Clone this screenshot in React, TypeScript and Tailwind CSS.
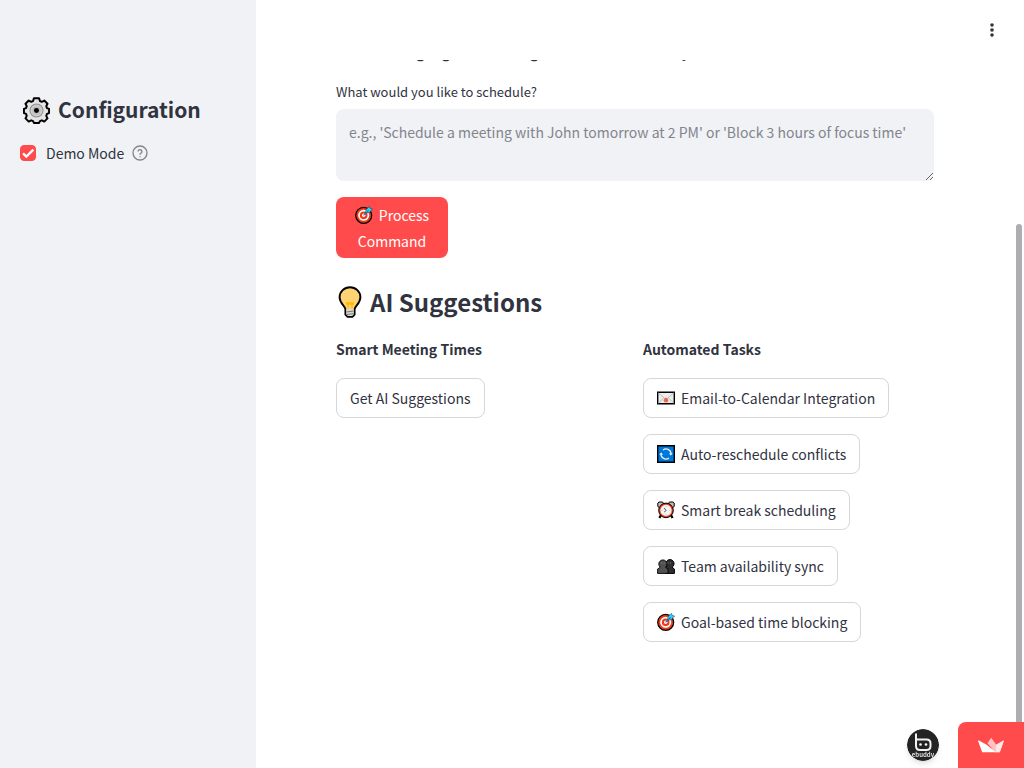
import { ReactNode } from "react";

type IconProps = { className?: string };

function GearIcon({ className }: IconProps) {
  return (
    <svg viewBox="0 0 26 26" className={className} aria-hidden="true">
      <path
        d="M10.5 1.2h5l.8 2.7 1.8.7 2.4-1.2 3.1 3.1-1.2 2.4.7 1.8 2 .8v4l-2 .8-.7 1.9 1.2 2.4-3.1 3.1-2.4-1.2-1.8.7-.8 1.8h-5l-.8-1.8-1.8-.7-2.4 1.2-3.1-3.1 1.2-2.4-.7-1.9-2-.8v-4l2-.8.7-1.8-1.2-2.4 3.1-3.1 2.4 1.2 1.8-.7z"
        fill="#e4e4e4"
        stroke="#000"
        strokeWidth="1.9"
        strokeLinejoin="round"
      />
      <circle cx="13" cy="13" r="6.3" fill="#cdcdcd" stroke="#8e8e8e" strokeWidth="1" />
      <circle cx="13" cy="13" r="4.2" fill="#bdbdbd" />
      <circle cx="13" cy="13" r="2.4" fill="#000" />
    </svg>
  );
}

function TargetIcon({ className }: IconProps) {
  return (
    <svg viewBox="0 0 18 18" className={className} aria-hidden="true">
      <circle cx="8.7" cy="9.3" r="8" fill="#f03a17" stroke="#000" strokeWidth="1.2" />
      <circle cx="8.7" cy="9.3" r="4.7" fill="#f03a17" stroke="#fff" strokeWidth="1.7" />
      <circle cx="8.7" cy="9.3" r="1.7" fill="#fff" />
      <path d="M10.6 7.2 11 3.5 14.5.4l.7 2 2.4.6-3.5 3.7z" fill="#31d2f7" stroke="#0b2b36" strokeWidth=".5" strokeLinejoin="round" />
      <path d="m8.500 9.400 5-5" stroke="#0078d7" strokeWidth="1.1" />
    </svg>
  );
}

function BulbIcon({ className }: IconProps) {
  return (
    <svg viewBox="0 0 24 32" className={className} aria-hidden="true">
      <path
        d="M7.4 23.2C6.8 19.7 1.6 17.2 1.6 11.2a10.4 10 0 0 1 20.8 0c0 6-5.2 8.5-5.8 12v5.4l-2.2 2.2H9.6l-2.2-2.2z"
        fill="#ffd374"
        stroke="#000"
        strokeWidth="1.9"
        strokeLinejoin="round"
      />
      <path d="M8.3 23h7.4v5.2l-1.8 1.7h-3.8l-1.8-1.7z" fill="#d8d8d8" />
      <path d="m8.3 26 7.4-1m-7.4 3.6 7.4-1" stroke="#777" strokeWidth="1" />
      <path d="M10 22.5v-4.3H8.5V17h7v1.2H14v4.3m-4-4.3h4" fill="none" stroke="#ffb900" strokeWidth="1.3" />
    </svg>
  );
}

function EnvelopeIcon({ className }: IconProps) {
  return (
    <svg viewBox="0 0 18 18" className={className} aria-hidden="true">
      <path d="M.7 3.2h16.6v11.6H.7z" fill="#ececec" stroke="#000" strokeWidth="1.4" />
      <path d="m1.4 14 5.3-5m9.9 5-5.3-5M1.4 4l6 5.2h3.2l6-5.2" fill="none" stroke="#b9b9b9" strokeWidth=".9" />
      <circle cx="9" cy="11.3" r="2.3" fill="#f16b50" />
      <path d="m9 9.5.8 1.8-1.2 1" fill="none" stroke="#cf4a30" strokeWidth=".6" />
    </svg>
  );
}

function RefreshIcon({ className }: IconProps) {
  return (
    <svg viewBox="0 0 18 18" className={className} aria-hidden="true">
      <path d="M.7.7h16.6v16.6H.7z" fill="#0078d7" stroke="#000" strokeWidth="1.4" />
      <path d="M6 5a5 5 0 0 1 8 4.500M12 13a5 5 0 0 1-8-4.500" fill="none" stroke="#e8f3fc" strokeWidth="1.2" />
      <path d="m12 8.200 3.800.2-2.200 2.200zM6 9.800l-3.800-.2 2.200-2.200z" fill="#e8f3fc" />
    </svg>
  );
}

function AlarmIcon({ className }: IconProps) {
  return (
    <svg viewBox="0 0 18 18" className={className} aria-hidden="true">
      <path d="m4 14-1.6 3M14 14l1.6 3" stroke="#000" strokeWidth="2.2" />
      <path d="M.8 5.500V2L2 1h3.500L7 3 3 7zM17.200 5.500V2L16 1h-3.500L11 3l4 4z" fill="#bdbdbd" stroke="#000" strokeWidth="1" />
      <circle cx="9" cy="9.4" r="7.3" fill="#f03a17" stroke="#000" strokeWidth="1" />
      <circle cx="9" cy="9.4" r="5.6" fill="#f5f5f5" />
      <path d="m7 7 2.2 2.4L7.2 11" fill="none" stroke="#444" strokeWidth=".9" />
      <path d="M9 5v.8m0 7.2v.8M4.8 9.4h.8m6.8 0h.8" stroke="#999" strokeWidth=".7" />
    </svg>
  );
}

function PeopleIcon({ className }: IconProps) {
  return (
    <svg viewBox="0 0 18 18" className={className} aria-hidden="true">
      <path d="M8 16.400V11l2-1.500A4.100 4.100 0 1 1 15 10.200l2.400 1.800v4.400z" fill="#2e2e2e" stroke="#000" strokeWidth="1" strokeLinejoin="round" />
      <path d="M.6 16.400V12l2.700-1.800a4.100 4.100 0 1 1 5.200 0l2.500 1.800v4.400z" fill="#515151" stroke="#000" strokeWidth=".9" strokeLinejoin="round" />
      <path d="M4.4 5.300v1.4m2.700-1.400v1.400M11 5.300v1.400m2.400-1.400v1.400" stroke="#808080" strokeWidth=".8" />
    </svg>
  );
}

function HelpIcon({ className }: IconProps) {
  return (
    <svg viewBox="0 0 24 24" className={className} fill="none" stroke="currentColor" strokeWidth="2" strokeLinecap="round" strokeLinejoin="round" aria-hidden="true">
      <circle cx="12" cy="12" r="10.5" />
      <path d="M9.1 9a3 3 0 0 1 5.8 1c0 2-2.9 2.6-2.9 4" />
      <path d="M12 17.5h.01" />
    </svg>
  );
}

function CrownIcon({ className }: IconProps) {
  return (
    <svg viewBox="0 0 26 15" className={className} aria-hidden="true">
      <path d="M12.8.3Q13.2-.1 13.6.3l4.6 6.4 6.900-4q.9-.4.7.4l-4 11.200h-4.500L9.500 5.200z" fill="#ffc3c6" />
      <path d="m18.200 6.700 6.900-4q.9-.4.7.4l-4 11.200h-3.600z" fill="#ffe9ea" />
      <path d="m8.200 6.600 10 7.700h-14L.2 3.200Q0 2.200.9 2.600z" fill="#fff" />
    </svg>
  );
}

function SuggestionButton({ icon, children }: { icon?: ReactNode; children: ReactNode }) {
  return (
    <button
      type="button"
      className="flex h-10 items-center gap-1.5 rounded-lg border border-[#d6d6d8] bg-white px-[13px] text-sm whitespace-nowrap"
    >
      {icon}
      {children}
    </button>
  );
}

export default function App() {
  return (
    <div className="flex min-h-screen bg-white font-['Noto_Sans_CJK_SC','Noto_Sans',sans-serif] text-[#31333f]">
      <aside className="w-64 shrink-0 bg-[#f0f2f6] px-5 pt-23">
        <h2 className="flex h-9 items-center gap-2 pl-[3px] text-[21px] font-bold">
          <GearIcon className="size-[27px]" />
          Configuration
        </h2>
        <div className="mt-[13px] flex h-6 items-center text-sm">
          <label className="flex items-center gap-2.5">
            <span className="grid size-4 place-items-center">
              <input
                type="checkbox"
                defaultChecked
                className="peer col-start-1 row-start-1 size-4 appearance-none rounded border border-[#ff4b4b] checked:bg-[#ff4b4b]"
              />
              <svg viewBox="0 0 17 13" className="pointer-events-none z-10 col-start-1 row-start-1 w-3.5" aria-hidden="true">
                <path d="m2.500 6.500 4 4L15 2" fill="none" stroke="#fff" strokeWidth="2.800" />
              </svg>
            </span>
            Demo Mode
          </label>
          <button type="button" aria-label="Help" className="ml-2 text-[#83858c]">
            <HelpIcon className="size-4" />
          </button>
        </div>
      </aside>

      <div className="flex min-w-0 flex-1 flex-col">
        <header className="z-10 flex h-15 items-center justify-end bg-white pr-5">
          <button type="button" aria-label="Menu" className="flex w-6 justify-center">
            <svg viewBox="0 0 4 14" className="h-3.5 w-1" fill="#31333f" aria-hidden="true">
              <circle cx="2" cy="2" r="1.8" />
              <circle cx="2" cy="7" r="1.8" />
              <circle cx="2" cy="12" r="1.8" />
            </svg>
          </button>
        </header>

        <div className="flex flex-1">
          <main className="min-w-0 flex-1 overflow-hidden pr-20 pb-20 pl-20">
            <p className="-mt-5 text-sm leading-6 font-bold">Natural Language Scheduling with Calendars Today</p>
            <label htmlFor="command" className="mt-[18px] block text-[13px] leading-5">
              What would you like to schedule?
            </label>
            <textarea
              id="command"
              className="mt-[7px] block h-18 w-full rounded-lg bg-[#f0f2f6] px-[13px] py-[11px] text-sm leading-6 placeholder:text-[#83858c]"
              placeholder="e.g., 'Schedule a meeting with John tomorrow at 2 PM' or 'Block 3 hours of focus time'"
            />
            <button type="button" className="mt-4 block h-[61px] w-28 rounded-lg bg-[#ff4b4b] px-3 text-sm leading-[26px] text-white">
              <TargetIcon className="mr-1.5 inline size-[18px] align-[-3px]" />
              Process Command
            </button>

            <h2 className="mt-6 flex h-10 items-center gap-2 pl-0.5 text-2xl font-bold">
              <BulbIcon className="h-8 w-6" />
              AI Suggestions
            </h2>
            <div className="mt-[15px] grid grid-cols-2 gap-4">
              <section>
                <h3 className="mb-[17px] text-sm leading-6 font-bold">Smart Meeting Times</h3>
                <SuggestionButton>Get AI Suggestions</SuggestionButton>
              </section>
              <section>
                <h3 className="mb-[17px] text-sm leading-6 font-bold">Automated Tasks</h3>
                <div className="flex flex-col items-start gap-4">
                  <SuggestionButton icon={<EnvelopeIcon className="size-[18px]" />}>Email-to-Calendar Integration</SuggestionButton>
                  <SuggestionButton icon={<RefreshIcon className="size-[18px]" />}>Auto-reschedule conflicts</SuggestionButton>
                  <SuggestionButton icon={<AlarmIcon className="size-[18px]" />}>Smart break scheduling</SuggestionButton>
                  <SuggestionButton icon={<PeopleIcon className="size-[18px]" />}>Team availability sync</SuggestionButton>
                  <SuggestionButton icon={<TargetIcon className="size-[18px]" />}>Goal-based time blocking</SuggestionButton>
                </div>
              </section>
            </div>
          </main>
          <div className="flex w-2.5 justify-center pt-41" aria-hidden="true">
            <div className="w-1.5 rounded-full bg-[#adadb2]" />
          </div>
        </div>
      </div>

      <div className="fixed right-0 bottom-0 z-20 flex items-end gap-[19px]">
        <a href="#profile" aria-label="Profile" className="mb-[7px] size-8 overflow-hidden rounded-full shadow-md">
          <svg viewBox="0 0 32 32" className="size-8">
            <circle cx="16" cy="16" r="16" fill="#242424" />
            <path d="M9 4.500V17q0 4 4 4h6.500q4 0 4-4v-2.500q0-4-4-4H9" fill="none" stroke="#f3f3f3" strokeWidth="2" />
            <circle cx="13.500" cy="15.500" r="1.300" fill="#fff" />
            <circle cx="19" cy="15.500" r="1.300" fill="#fff" />
            <text x="16" y="28" textAnchor="middle" fontSize="6" fontWeight="bold" fill="#ddd">ebuddy</text>
          </svg>
        </a>
        <a href="#streamlit" aria-label="Hosted with Streamlit" className="flex h-[46px] w-[66px] items-center justify-center rounded-tl-lg bg-[#ff4b4b]">
          <CrownIcon className="w-[26px]" />
        </a>
      </div>
    </div>
  );
}
